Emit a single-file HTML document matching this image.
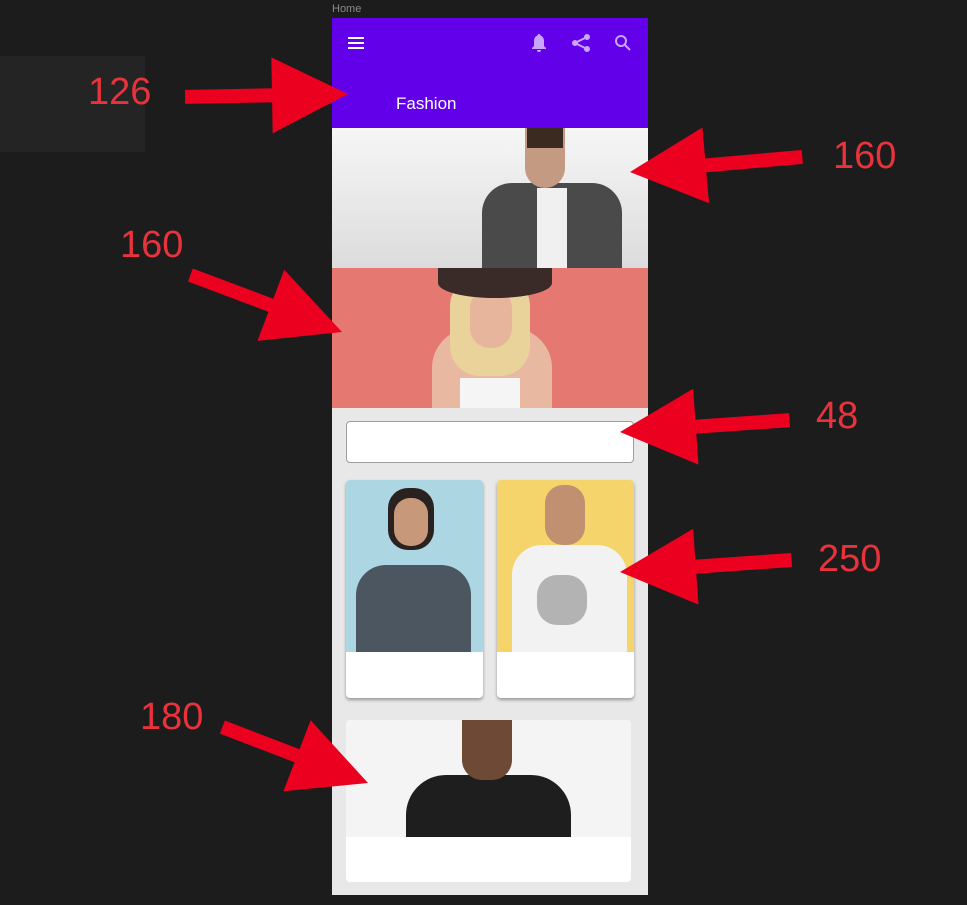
<!DOCTYPE html>
<html><head><style>
body{margin:0;width:967px;height:905px;background:#1c1c1c;position:relative;overflow:hidden;font-family:"Liberation Sans",sans-serif}
.a{position:absolute}
.num{position:absolute;color:#e8333d;font-size:38px;font-family:"Liberation Sans",sans-serif}
</style></head><body>
<div class="a" style="left:0;top:56px;width:145px;height:96px;background:#242424"></div>
<div class="a" style="left:332px;top:3px;font-size:11px;color:#8a8a8a">Home</div>
<div class="a" style="left:332px;top:18px;width:316px;height:877px;background:#e8e8e8;overflow:hidden">
 <div class="a" style="left:0;top:0;width:316px;height:110px;background:#6200ea"></div>
 <div class="a" style="left:16px;top:19px;width:16px;height:2px;background:#fff;box-shadow:0 5px 0 #fff,0 10px 0 #fff"></div>
 <svg class="a" style="left:196px;top:14px" width="104" height="22" viewBox="0 0 104 22">
  <path d="M11 2c-1 0-1.5.7-1.5 1.5C7 4.5 6 6.5 6 9v5l-2 2v1h14v-1l-2-2V9c0-2.5-1-4.5-3.5-5.5C12.5 2.7 12 2 11 2zm-2 16a2 2 0 0 0 4 0z" fill="#c9a6fb"/>
  <g fill="#c9a6fb" stroke="#c9a6fb" stroke-width="2"><circle cx="59" cy="5" r="2"/><circle cx="47" cy="11" r="2"/><circle cx="59" cy="17" r="2"/><path d="M59 5L47 11L59 17" fill="none"/></g>
  <g fill="none" stroke="#c9a6fb" stroke-width="2"><circle cx="93" cy="9" r="5"/><path d="M97 13l5 5"/></g>
 </svg>
 <div class="a" style="left:64px;top:76px;color:#fff;font-size:17px">Fashion</div>
 <div class="a" style="left:0;top:110px;width:316px;height:140px;background:linear-gradient(#f6f6f6,#dcdcdc)">
  <div class="a" style="left:150px;top:55px;width:140px;height:85px;background:#4a4a4a;border-radius:30px 30px 0 0"></div>
  <div class="a" style="left:193px;top:0;width:40px;height:60px;background:#c49a82;border-radius:0 0 20px 20px"></div>
  <div class="a" style="left:195px;top:0;width:36px;height:20px;background:#3a2a20"></div>
  <div class="a" style="left:205px;top:60px;width:30px;height:80px;background:#f0f0f0"></div>
 </div>
 <div class="a" style="left:0;top:250px;width:316px;height:140px;background:#e57972">
  <div class="a" style="left:100px;top:60px;width:120px;height:80px;background:#e8b8a0;border-radius:40px 40px 0 0"></div>
  <div class="a" style="left:118px;top:8px;width:80px;height:100px;background:#e9d39a;border-radius:30px"></div>
  <div class="a" style="left:138px;top:20px;width:42px;height:60px;background:#e6b59c;border-radius:20px"></div>
  <div class="a" style="left:106px;top:0;width:114px;height:30px;background:#3a2a28;border-radius:0 0 50% 50%"></div>
  <div class="a" style="left:128px;top:110px;width:60px;height:30px;background:#f5f5f5"></div>
 </div>
 <div class="a" style="left:14px;top:403px;width:286px;height:40px;background:#fff;border:1px solid #9e9e9e;border-radius:4px"></div>
 <div class="a" style="left:14px;top:462px;width:137px;height:218px;background:#fff;border-radius:4px;box-shadow:0 2px 3px rgba(0,0,0,.35);overflow:hidden">
  <div style="height:172px;background:#acd6e2;position:relative">
   <div class="a" style="left:10px;top:85px;width:115px;height:87px;background:#4c5660;border-radius:30px 30px 0 0"></div>
   <div class="a" style="left:42px;top:8px;width:46px;height:62px;background:#2a2220;border-radius:20px"></div>
   <div class="a" style="left:48px;top:18px;width:34px;height:48px;background:#c8987a;border-radius:16px"></div>
  </div>
 </div>
 <div class="a" style="left:165px;top:462px;width:137px;height:218px;background:#fff;border-radius:4px;box-shadow:0 2px 3px rgba(0,0,0,.35);overflow:hidden">
  <div style="height:172px;background:#f6d46c;position:relative">
   <div class="a" style="left:15px;top:65px;width:115px;height:107px;background:#f2f2f2;border-radius:30px 30px 0 0"></div>
   <div class="a" style="left:48px;top:5px;width:40px;height:60px;background:#c09070;border-radius:18px"></div>
   <div class="a" style="left:40px;top:95px;width:50px;height:50px;background:#888;border-radius:20px;opacity:.6"></div>
  </div>
 </div>
 <div class="a" style="left:14px;top:702px;width:285px;height:162px;background:#fff;border-radius:4px;overflow:hidden">
  <div style="height:117px;background:#f4f4f4;position:relative">
   <div class="a" style="left:60px;top:55px;width:165px;height:62px;background:#1e1e1e;border-radius:40px 40px 0 0"></div>
   <div class="a" style="left:116px;top:0;width:50px;height:60px;background:#6e4a36;border-radius:0 0 20px 20px"></div>
  </div>
 </div>
</div>
<svg class="a" style="left:0;top:0" width="967" height="905">
 <defs><g id="ar"><polygon points="0,0 -76,-38 -76,38" fill="#ec0020"/></g></defs>
 <g transform="translate(348,94) rotate(-1)"><rect x="-163" y="-7" width="92" height="14" fill="#ec0020"/><use href="#ar"/></g>
 <g transform="translate(630,172) rotate(175)"><rect x="-173" y="-7" width="102" height="14" fill="#ec0020"/><use href="#ar"/></g>
 <g transform="translate(342,332) rotate(20.6)"><rect x="-162" y="-7" width="92" height="14" fill="#ec0020"/><use href="#ar"/></g>
 <g transform="translate(620,432) rotate(176)"><rect x="-170" y="-7" width="100" height="14" fill="#ec0020"/><use href="#ar"/></g>
 <g transform="translate(620,572) rotate(176)"><rect x="-172" y="-7" width="102" height="14" fill="#ec0020"/><use href="#ar"/></g>
 <g transform="translate(368,783) rotate(21)"><rect x="-156" y="-7" width="86" height="14" fill="#ec0020"/><use href="#ar"/></g>
</svg>
<div class="num" style="left:88px;top:71px">126</div>
<div class="num" style="left:833px;top:135px">160</div>
<div class="num" style="left:120px;top:224px">160</div>
<div class="num" style="left:816px;top:395px">48</div>
<div class="num" style="left:818px;top:538px">250</div>
<div class="num" style="left:140px;top:696px">180</div>
</body></html>
